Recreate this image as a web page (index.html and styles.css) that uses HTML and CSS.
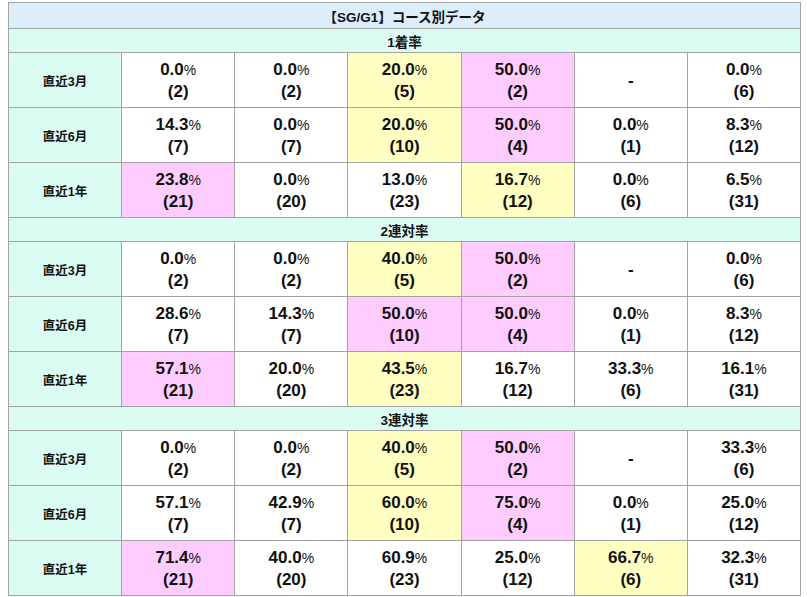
FILE: index.html
```html
<!DOCTYPE html>
<html lang="ja">
<head>
<meta charset="utf-8">
<title>コース別データ</title>
<link rel="stylesheet" href="styles.css">
</head>
<body>
<div class="wrap">
<table class="course">
  <colgroup>
    <col class="c-label"><col><col><col><col><col><col>
  </colgroup>
  <tr><th class="title" colspan="7">【SG/G1】コース別データ</th></tr>

  <tr><th class="section" colspan="7">1着率</th></tr>
  <tr>
    <th class="label">直近3月</th>
    <td>0.0<span class="pc">%</span><br>(2)</td>
    <td>0.0<span class="pc">%</span><br>(2)</td>
    <td class="y">20.0<span class="pc">%</span><br>(5)</td>
    <td class="p">50.0<span class="pc">%</span><br>(2)</td>
    <td>-</td>
    <td>0.0<span class="pc">%</span><br>(6)</td>
  </tr>
  <tr>
    <th class="label">直近6月</th>
    <td>14.3<span class="pc">%</span><br>(7)</td>
    <td>0.0<span class="pc">%</span><br>(7)</td>
    <td class="y">20.0<span class="pc">%</span><br>(10)</td>
    <td class="p">50.0<span class="pc">%</span><br>(4)</td>
    <td>0.0<span class="pc">%</span><br>(1)</td>
    <td>8.3<span class="pc">%</span><br>(12)</td>
  </tr>
  <tr>
    <th class="label">直近1年</th>
    <td class="p">23.8<span class="pc">%</span><br>(21)</td>
    <td>0.0<span class="pc">%</span><br>(20)</td>
    <td>13.0<span class="pc">%</span><br>(23)</td>
    <td class="y">16.7<span class="pc">%</span><br>(12)</td>
    <td>0.0<span class="pc">%</span><br>(6)</td>
    <td>6.5<span class="pc">%</span><br>(31)</td>
  </tr>

  <tr><th class="section" colspan="7">2連対率</th></tr>
  <tr>
    <th class="label">直近3月</th>
    <td>0.0<span class="pc">%</span><br>(2)</td>
    <td>0.0<span class="pc">%</span><br>(2)</td>
    <td class="y">40.0<span class="pc">%</span><br>(5)</td>
    <td class="p">50.0<span class="pc">%</span><br>(2)</td>
    <td>-</td>
    <td>0.0<span class="pc">%</span><br>(6)</td>
  </tr>
  <tr>
    <th class="label">直近6月</th>
    <td>28.6<span class="pc">%</span><br>(7)</td>
    <td>14.3<span class="pc">%</span><br>(7)</td>
    <td class="p">50.0<span class="pc">%</span><br>(10)</td>
    <td class="p">50.0<span class="pc">%</span><br>(4)</td>
    <td>0.0<span class="pc">%</span><br>(1)</td>
    <td>8.3<span class="pc">%</span><br>(12)</td>
  </tr>
  <tr>
    <th class="label">直近1年</th>
    <td class="p">57.1<span class="pc">%</span><br>(21)</td>
    <td>20.0<span class="pc">%</span><br>(20)</td>
    <td class="y">43.5<span class="pc">%</span><br>(23)</td>
    <td>16.7<span class="pc">%</span><br>(12)</td>
    <td>33.3<span class="pc">%</span><br>(6)</td>
    <td>16.1<span class="pc">%</span><br>(31)</td>
  </tr>

  <tr><th class="section" colspan="7">3連対率</th></tr>
  <tr>
    <th class="label">直近3月</th>
    <td>0.0<span class="pc">%</span><br>(2)</td>
    <td>0.0<span class="pc">%</span><br>(2)</td>
    <td class="y">40.0<span class="pc">%</span><br>(5)</td>
    <td class="p">50.0<span class="pc">%</span><br>(2)</td>
    <td>-</td>
    <td>33.3<span class="pc">%</span><br>(6)</td>
  </tr>
  <tr>
    <th class="label">直近6月</th>
    <td>57.1<span class="pc">%</span><br>(7)</td>
    <td>42.9<span class="pc">%</span><br>(7)</td>
    <td class="y">60.0<span class="pc">%</span><br>(10)</td>
    <td class="p">75.0<span class="pc">%</span><br>(4)</td>
    <td>0.0<span class="pc">%</span><br>(1)</td>
    <td>25.0<span class="pc">%</span><br>(12)</td>
  </tr>
  <tr>
    <th class="label">直近1年</th>
    <td class="p">71.4<span class="pc">%</span><br>(21)</td>
    <td>40.0<span class="pc">%</span><br>(20)</td>
    <td>60.9<span class="pc">%</span><br>(23)</td>
    <td>25.0<span class="pc">%</span><br>(12)</td>
    <td class="y">66.7<span class="pc">%</span><br>(6)</td>
    <td>32.3<span class="pc">%</span><br>(31)</td>
  </tr>
</table>
</div>
</body>
</html>
```

FILE: styles.css
```css
html, body {
  margin: 0;
  padding: 0;
  background: #ffffff;
}

.wrap {
  padding: 2px 6px 0 8px;
}

.course {
  width: 793px;
  border-collapse: collapse;
  table-layout: fixed;
  font-family: "Liberation Sans", Arial, "Noto Sans CJK JP", sans-serif;
  color: #111111;
  border-left: 1px solid #777777;
}

.course th,
.course td {
  border: 1px solid #a3a3a3;
  padding: 0;
  text-align: center;
  vertical-align: middle;
}

.title {
  height: 25px;
  background: #dcedfb;
  font-size: 13.5px;
  font-weight: bold;
}

.section {
  height: 23px;
  background: #dbfcf3;
  font-size: 13.5px;
  font-weight: bold;
}

.label {
  background: #dbfcf3;
  font-size: 12.5px;
  font-weight: bold;
}

.course td {
  height: 54px;
  font-size: 17px;
  font-weight: bold;
  line-height: 21px;
  background: #ffffff;
}

.course td.y {
  background: #ffffc2;
}

.course td.p {
  background: #ffccff;
}

.pc {
  font-size: 14px;
  font-weight: normal;
}
```
